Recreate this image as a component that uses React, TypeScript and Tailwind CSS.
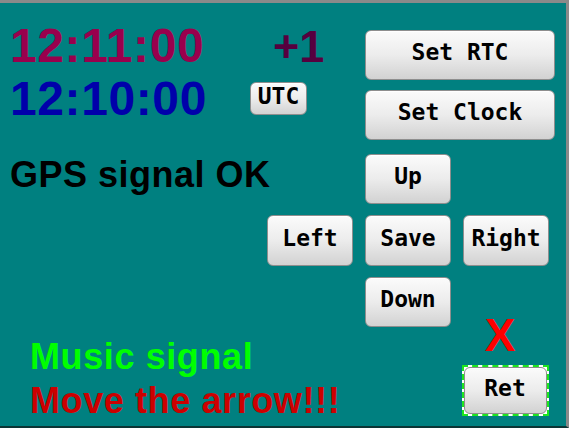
import type { ReactNode } from "react";

const sans = "font-['Liberation_Sans',Arial,sans-serif] font-bold";
const mono = "font-['DejaVu_Sans_Mono',monospace] font-bold";

function Btn({ children, className = "" }: { children: ReactNode; className?: string }) {
  return (
    <button
      className={`flex items-center justify-center rounded-[6px] border border-[#8e8e8e] bg-gradient-to-b from-[#fbfbfb] via-[#ececec] to-[#d2d2d2] pb-[5px] text-[23px] leading-none text-black shadow-[inset_0_1px_0_#ffffff] ${mono} ${className}`}
    >
      {children}
    </button>
  );
}

export default function App() {
  return (
    <div className="box-border h-[428px] w-[569px] overflow-hidden border-t-[3px] border-r-[3px] border-b-2 border-t-[#8a8a8a] border-r-[#8a8a8a] border-b-[#0b3535] bg-[#008080] pl-[10px]">
      {/* clocks + set buttons */}
      <div className="mt-[27px] grid grid-cols-[245px_86px_86px_86px] gap-x-3 gap-y-[10px]">
        <div className={`-mt-[8px] text-[48px] leading-none tracking-[0.6px] text-[#99004d] ${sans}`}>12:11:00</div>
        <div className={`-mt-[6px] ml-[6px] text-[45px] leading-none text-[#56003f] ${sans}`}>+1</div>
        <Btn className="col-span-2 h-[50px] w-[190px]">Set RTC</Btn>

        <div className="col-span-2 flex items-start">
          <div className={`-mt-[15px] w-[240px] text-[48px] leading-none tracking-[0.6px] text-[#0000aa] ${sans}`}>12:10:00</div>
          <Btn className="-mt-[8px] h-[33px] w-[57px] pb-[2px] text-[20px]">UTC</Btn>
        </div>
        <Btn className="col-span-2 h-[50px] w-[190px]">Set Clock</Btn>
      </div>

      {/* direction pad */}
      <div className="mt-[14px] grid grid-cols-[245px_86px_86px_86px] gap-x-3 gap-y-[11px]">
        <div className={`col-span-2 mt-[3px] text-[36px] leading-none tracking-[0.5px] text-black ${sans}`}>GPS signal OK</div>
        <Btn className="col-start-3 h-[50px]">Up</Btn>

        <Btn className="col-start-2 h-[51px]">Left</Btn>
        <Btn className="h-[51px]">Save</Btn>
        <Btn className="h-[51px]">Right</Btn>

        <div className={`col-span-2 row-span-2 flex flex-col justify-end gap-[8px] pl-[20px] text-[36px] leading-none tracking-[0.6px] ${sans}`}>
          <div className="text-[#00ff00]">Music signal</div>
          <div className="-mb-[3px] text-[#cc0000]">Move the arrow!!!</div>
        </div>
        <Btn className="h-[50px]">Down</Btn>
        <div className="row-span-2 flex flex-col items-center">
          <div className={`mt-[35px] pr-[12px] text-[46px] leading-none text-[#ff0000] ${sans}`}>X</div>
          <div className="mt-[7px] -ml-[2px] border-2 border-dashed border-[#1ee61e] bg-white">
            <Btn className="h-[47px] w-[83px] border-[#5cc8f0]">Ret</Btn>
          </div>
        </div>
      </div>
    </div>
  );
}
